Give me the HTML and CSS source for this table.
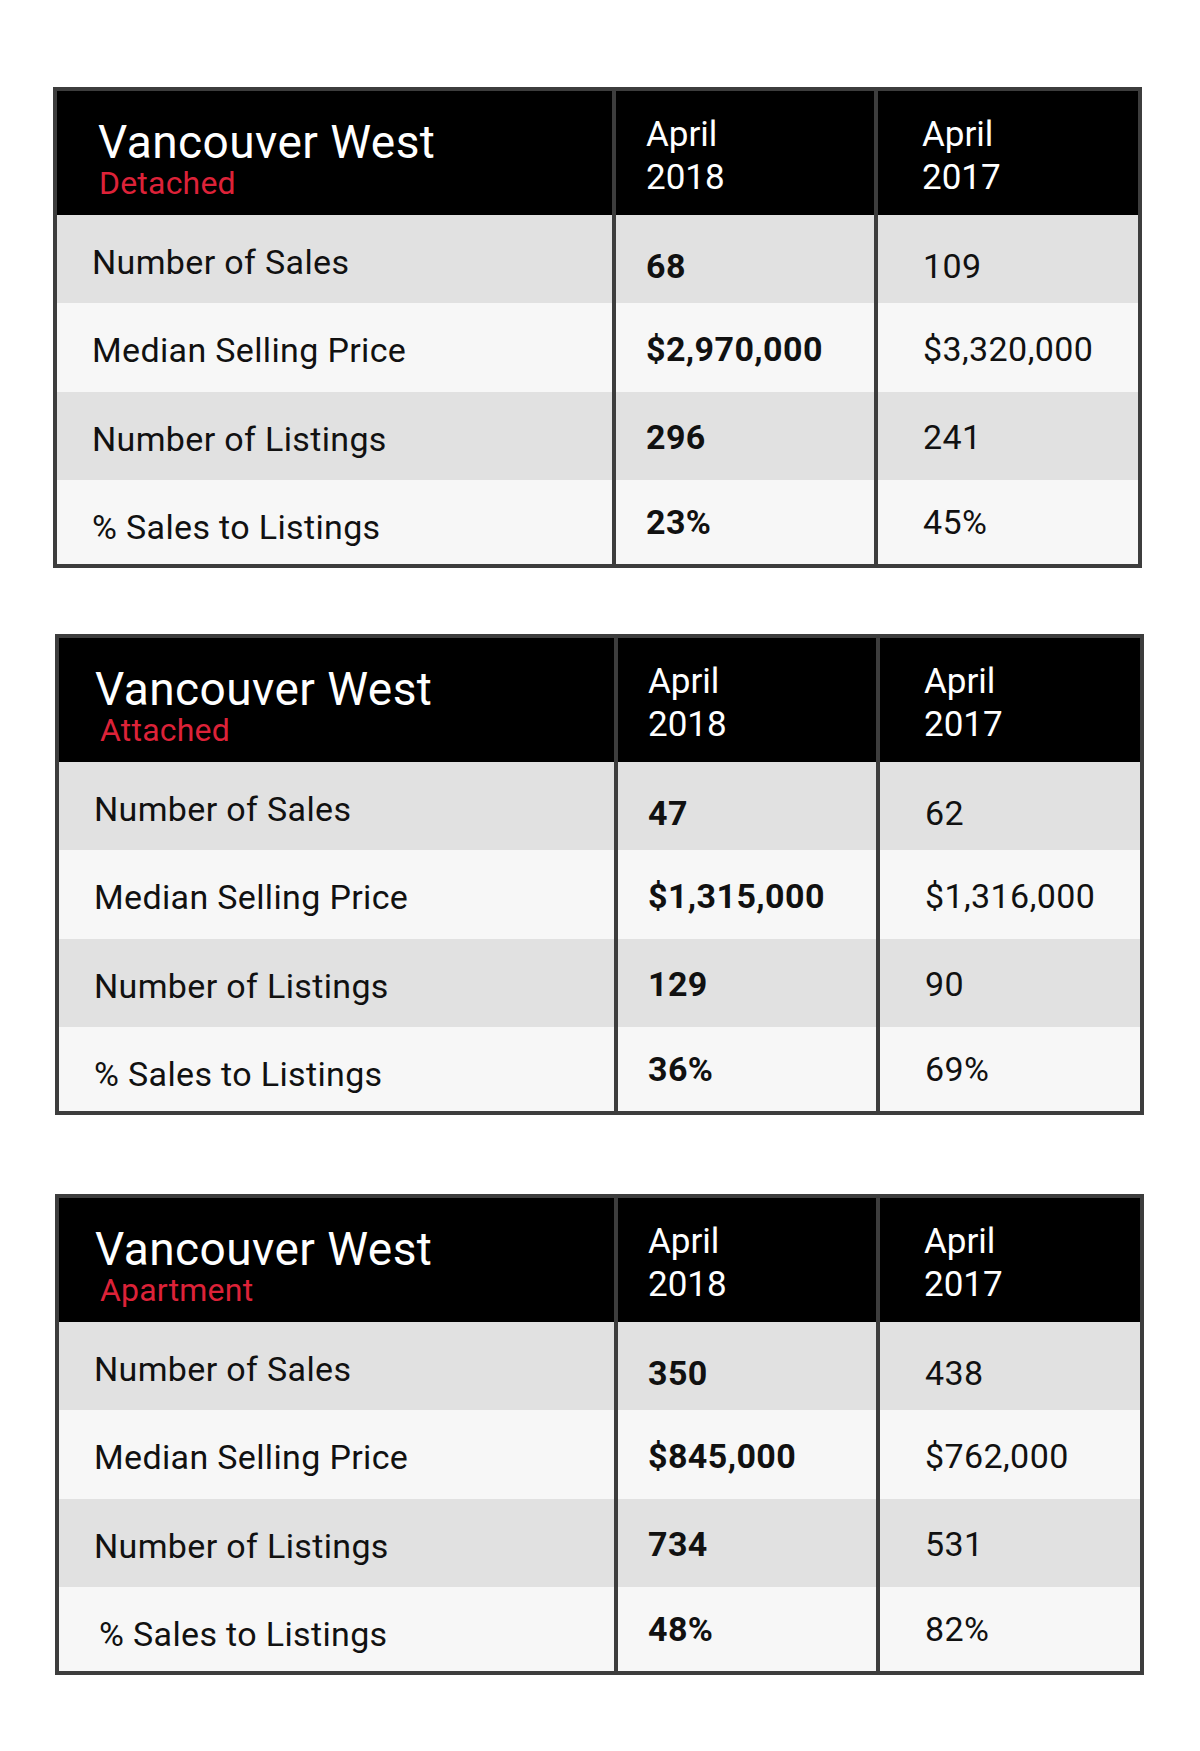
FILE: index.html
```html
<!DOCTYPE html>
<html lang="en">
<head>
<meta charset="utf-8">
<title>Vancouver West – April 2018 vs April 2017</title>
<link rel="stylesheet" href="styles.css">
</head>
<body>
<main class="page">
  <section class="tbl t1">
    <div class="hd hd-title"><div class="title">Vancouver West</div><div class="sub">Detached</div></div>
    <div class="hd hd-col c2"><div>April</div><div>2018</div></div>
    <div class="hd hd-col c3"><div>April</div><div>2017</div></div>

    <div class="cell lab odd">Number of Sales</div>
    <div class="cell val bold odd r1 c2">68</div>
    <div class="cell val odd r1 c3">109</div>

    <div class="cell lab even">Median Selling Price</div>
    <div class="cell val bold even r2 c2">$2,970,000</div>
    <div class="cell val even r2 c3">$3,320,000</div>

    <div class="cell lab odd">Number of Listings</div>
    <div class="cell val bold odd r3 c2">296</div>
    <div class="cell val odd r3 c3">241</div>

    <div class="cell lab even">% Sales to Listings</div>
    <div class="cell val bold even r4 c2">23%</div>
    <div class="cell val even r4 c3">45%</div>
  </section>

  <section class="tbl t2">
    <div class="hd hd-title"><div class="title">Vancouver West</div><div class="sub">Attached</div></div>
    <div class="hd hd-col c2"><div>April</div><div>2018</div></div>
    <div class="hd hd-col c3"><div>April</div><div>2017</div></div>

    <div class="cell lab odd">Number of Sales</div>
    <div class="cell val bold odd r1 c2">47</div>
    <div class="cell val odd r1 c3">62</div>

    <div class="cell lab even">Median Selling Price</div>
    <div class="cell val bold even r2 c2">$1,315,000</div>
    <div class="cell val even r2 c3">$1,316,000</div>

    <div class="cell lab odd">Number of Listings</div>
    <div class="cell val bold odd r3 c2">129</div>
    <div class="cell val odd r3 c3">90</div>

    <div class="cell lab even">% Sales to Listings</div>
    <div class="cell val bold even r4 c2">36%</div>
    <div class="cell val even r4 c3">69%</div>
  </section>

  <section class="tbl t3">
    <div class="hd hd-title"><div class="title">Vancouver West</div><div class="sub">Apartment</div></div>
    <div class="hd hd-col c2"><div>April</div><div>2018</div></div>
    <div class="hd hd-col c3"><div>April</div><div>2017</div></div>

    <div class="cell lab odd">Number of Sales</div>
    <div class="cell val bold odd r1 c2">350</div>
    <div class="cell val odd r1 c3">438</div>

    <div class="cell lab even">Median Selling Price</div>
    <div class="cell val bold even r2 c2">$845,000</div>
    <div class="cell val even r2 c3">$762,000</div>

    <div class="cell lab odd">Number of Listings</div>
    <div class="cell val bold odd r3 c2">734</div>
    <div class="cell val odd r3 c3">531</div>

    <div class="cell lab even lab-indent">% Sales to Listings</div>
    <div class="cell val bold even r4 c2">48%</div>
    <div class="cell val even r4 c3">82%</div>
  </section>
</main>
</body>
</html>
```

FILE: styles.css
```css
html, body {
  margin: 0;
  padding: 0;
  background: #ffffff;
}

body {
  font-family: Roboto, "Liberation Sans", Arial, sans-serif;
  color: #111111;
}

.page {
  display: flex;
  flex-direction: column;
  align-items: flex-start;
  padding-top: 87px;
  padding-bottom: 78px;
}

.tbl {
  display: grid;
  grid-template-columns: 555px 258px 260px;
  grid-template-rows: 124px 88px 89px 88px 84px;
  column-gap: 4px;
  border: 4px solid #3d3d3d;
  background: #3d3d3d;
}

.t1 { margin-left: 53px; }
.t2 { margin-left: 55px; margin-top: 66px; }
.t3 { margin-left: 55px; margin-top: 79px; }

.hd {
  background: #000000;
  color: #ffffff;
}

.hd-title {
  padding: 26px 0 0 36px;
}

.t1 .hd-title { padding-left: 41px; }

.title {
  font-size: 46px;
  line-height: 50px;
  letter-spacing: 0.45px;
  font-weight: 400;
}

.sub {
  font-size: 32px;
  line-height: 32px;
  letter-spacing: 0.2px;
  color: #dd2238;
  margin-left: 5px;
}

.t1 .sub { margin-left: 1px; }

.hd-col {
  font-size: 35px;
  line-height: 43px;
  padding-top: 22px;
}

.c2 { padding-left: 30px; }
.c3 { padding-left: 44px; }

.cell {
  font-size: 34px;
  line-height: 40px;
  white-space: nowrap;
}

.odd { background: #e1e1e1; }
.even { background: #f7f7f7; }

.lab {
  padding-left: 35px;
  padding-top: 27px;
  letter-spacing: 0.35px;
}

.lab-indent { padding-left: 40px; }

.val { letter-spacing: 0.4px; }

.val.c3 { padding-left: 45px; }

.bold { font-weight: 700; }

.r1 { padding-top: 31px; }
.r2 { padding-top: 26px; }
.r3 { padding-top: 25px; }
.r4 { padding-top: 22px; }
```
